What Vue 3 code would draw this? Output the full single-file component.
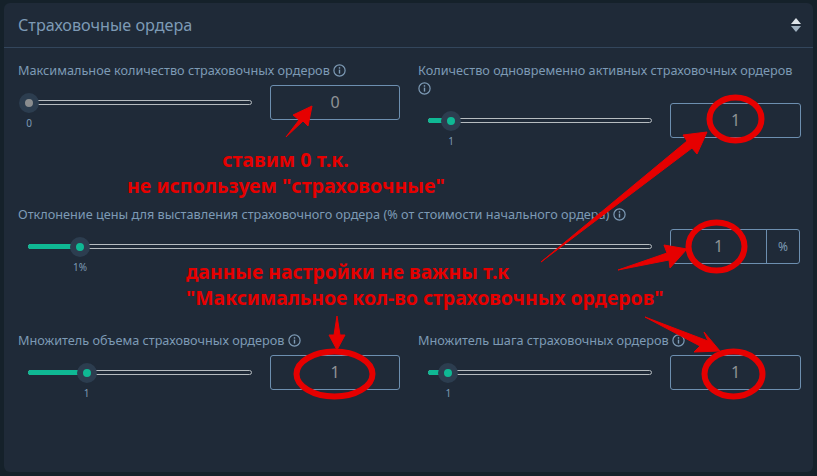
<script setup>
const rows = [
  [
    { label: 'Максимальное количество страховочных ордеров', value: '0', mark: '0', pos: 0 },
    { label: 'Количество одновременно активных страховочных ордеров', value: '1', mark: '1', pos: 10 },
  ],
  [
    { label: 'Отклонение цены для выставления страховочного ордера (% от стоимости начального ордера)', value: '1', mark: '1%', pos: 8.2, wide: true, unit: '%' },
  ],
  [
    { label: 'Множитель объема страховочных ордеров', value: '1', mark: '1', pos: 26 },
    { label: 'Множитель шага страховочных ордеров', value: '1', mark: '1', pos: 8.7 },
  ],
]

const arrows = [
  '286,137 299,120 293,115 312,106 308,126 303,121',
  '541,262 687,141 683,135 707,132 697,154 692,148',
  '618,270 667,253 664,245 687,249 670,268 669,260',
  '645,317 708,341 704,332 720,351 694,352 700,346',
  '337,316 340,335 345,335 337,350 329,335 334,335',
]

const circles = [
  { cx: 735.5, cy: 119, rx: 26, ry: 21.5 },
  { cx: 716.5, cy: 246.5, rx: 28, ry: 24 },
  { cx: 334.5, cy: 374, rx: 38, ry: 22.5 },
  { cx: 733.5, cy: 374, rx: 29, ry: 22.5 },
]
</script>

<template>
  <div class="page">
    <section class="panel">
      <header class="panel__head">
        <h3>Страховочные ордера</h3>
        <svg class="sort" width="10" height="14" viewBox="0 0 10 14">
          <path d="M5 0 L10 6 H0 Z" fill="#dfe5ea" />
          <path d="M0 8 H10 L5 14 Z" fill="#9fb0bf" />
        </svg>
      </header>
      <div class="panel__body">
        <div v-for="(row, i) in rows" :key="i" class="row">
          <div v-for="field in row" :key="field.label" class="field">
            <label class="field__label">
              {{ field.label }}
              <svg class="info" width="13" height="13" viewBox="0 0 13 13">
                <circle cx="6.5" cy="6.5" r="5.6" fill="none" stroke="currentColor" stroke-width="1.2" />
                <rect x="5.8" y="5.6" width="1.4" height="4" fill="currentColor" />
                <rect x="5.8" y="3.2" width="1.4" height="1.5" fill="currentColor" />
              </svg>
            </label>
            <div class="field__control">
              <div class="slider">
                <div class="slider__track">
                  <div class="slider__fill" :style="{ width: field.pos + '%' }"></div>
                  <div class="slider__thumb" :class="{ 'slider__thumb--off': field.pos === 0 }" :style="{ left: field.pos + '%' }">
                    <span class="slider__mark">{{ field.mark }}</span>
                  </div>
                </div>
              </div>
              <div class="input">
                <span class="input__value">{{ field.value }}</span>
                <span v-if="field.unit" class="input__unit">{{ field.unit }}</span>
              </div>
            </div>
          </div>
        </div>
      </div>
    </section>

    <svg class="marks" width="817" height="476" viewBox="0 0 817 476">
      <polygon v-for="points in arrows" :key="points" :points="points" fill="#e60000" stroke="#e60000" stroke-width="1" stroke-linejoin="round" />
      <ellipse v-for="c in circles" :key="c.cx" :cx="c.cx" :cy="c.cy" :rx="c.rx" :ry="c.ry" fill="none" stroke="#e60000" stroke-width="6" />
    </svg>

    <div class="note note--a">ставим 0 т.к.<br>не используем "страховочные"</div>
    <div class="note note--b">данные настройки не важны т.к<br>"Максимальное кол-во страховочных ордеров"</div>
  </div>
</template>

<style scoped>
.page {
  position: relative;
  width: 817px;
  height: 476px;
  padding: 3px 4px 4px;
  box-sizing: border-box;
  overflow: hidden;
  background: #15212a;
  font-family: "Noto Sans", "Open Sans", sans-serif;
}

.panel {
  height: 100%;
  background: #1f2a38;
  border-radius: 6px;
}

.panel__head {
  display: flex;
  justify-content: space-between;
  align-items: center;
  height: 45px;
  box-sizing: border-box;
  padding: 0 12px 0 14px;
  border-bottom: 1px solid #33465c;
}

.panel__head h3 {
  margin: 0;
  font-size: 16.2px;
  font-weight: 400;
  color: #7d9ab5;
}

.panel__body {
  padding: 14px 13px 0 14px;
}

.row {
  display: flex;
  gap: 18px;
  margin-bottom: 68px;
}

.field {
  flex: 1 1 0;
  min-width: 0;
}

.field:nth-child(2) .input {
  width: 131px;
  margin-right: -1px;
}

.field__label {
  display: block;
  min-height: 18px;
  margin: -1px 0 6px;
  font-size: 12.7px;
  line-height: 18px;
  color: #7d9ab5;
}

.info {
  vertical-align: -2px;
}

.field__control {
  display: flex;
  align-items: center;
  gap: 18px;
}

.slider {
  flex: 1 1 0;
  padding-left: 10px;
}

.slider__track {
  position: relative;
  height: 5px;
  box-sizing: border-box;
  border: 1px solid #b6bcc0;
  border-radius: 3px;
  background: #1f2a38;
}

.slider__fill {
  height: 100%;
  margin: -1px;
  padding: 1px;
  box-sizing: content-box;
  border-radius: 3px;
  background: #0fb894;
}

.slider__thumb {
  position: absolute;
  top: 50%;
  width: 20px;
  height: 20px;
  box-sizing: border-box;
  border: 6px solid #2c3d4f;
  border-radius: 50%;
  background: #0fb894;
  transform: translate(-50%, -50%);
}

.slider__thumb--off {
  background: #8a8d8f;
}

.slider__mark {
  position: absolute;
  top: 18px;
  left: 50%;
  font-size: 10px;
  line-height: 12px;
  color: #7d9ab5;
  transform: translateX(-50%);
}

.input {
  display: flex;
  width: 130px;
  height: 35px;
  flex: none;
  box-sizing: border-box;
  border: 1px solid #6d8fb0;
  border-radius: 3px;
  color: #8f9295;
}

.input__value {
  flex: 1;
  font-size: 16px;
  line-height: 33px;
  text-align: center;
}

.input__unit {
  width: 32px;
  border-left: 1px solid #6d8fb0;
  font-size: 12px;
  line-height: 33px;
  color: #7d9ab5;
  text-align: center;
}

.marks {
  position: absolute;
  top: 0;
  left: 0;
}

.note {
  position: absolute;
  font-size: 19.4px;
  font-weight: 700;
  line-height: 26px;
  color: #e60000;
  white-space: nowrap;
}

.note--a {
  top: 147px;
  left: 127px;
  width: 317px;
  font-size: 19.6px;
  text-align: center;
}

.note--b {
  top: 259px;
  left: 186px;
}
</style>

<style>
html, body {
  margin: 0;
  background: #15212a;
}
</style>
